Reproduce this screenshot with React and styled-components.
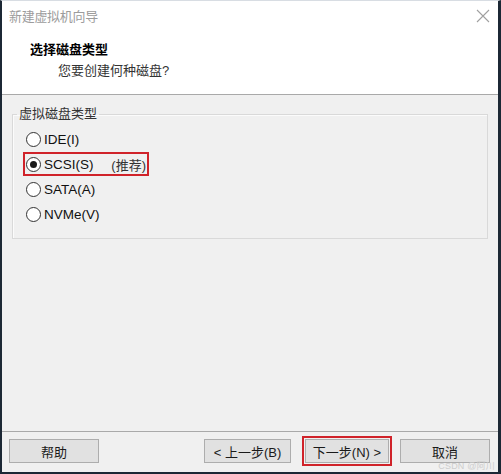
import React from 'react';
import styled, { createGlobalStyle } from 'styled-components';

const GlobalStyle = createGlobalStyle`
  html, body {
    margin: 0;
    padding: 0;
    background: #ffffff;
  }
  body {
    font-family: "Liberation Sans", "Noto Sans CJK SC", sans-serif;
  }
`;

const Window = styled.div`
  position: relative;
  width: 501px;
  height: 474px;
  box-sizing: border-box;
  display: flex;
  flex-direction: column;
  border-left: 2px solid #1c2835;
  border-right: 3px solid #1c2835;
  border-bottom: 2px solid #1c2835;
  border-top: 1px solid #d8dde3;
  background: #f0f0f0;
  overflow: hidden;
`;

const TitleBar = styled.div`
  height: 29px;
  display: flex;
  align-items: center;
  justify-content: space-between;
  padding: 0 8px 0 7px;
  background: #ffffff;
`;

const TitleText = styled.span`
  font-size: 13px;
  color: #9c9c9c;
  letter-spacing: -0.3px;
`;

const Header = styled.div`
  height: 65px;
  background: #ffffff;
  border-bottom: 1px solid #a9a9a9;
  padding: 10px 0 0 28px;
  box-sizing: border-box;
  display: flex;
  flex-direction: column;
`;

const Heading = styled.div`
  font-size: 13px;
  font-weight: bold;
  color: #000000;
  line-height: 20px;
`;

const SubHeading = styled.div`
  font-size: 13px;
  color: #333333;
  line-height: 20px;
  margin: 1px 0 0 28px;
`;

const Body = styled.div`
  flex: 1;
  padding: 11px 10px 0 10px;
`;

const Group = styled.fieldset`
  margin: 0;
  padding: 0 0 12px 4px;
  border: 1px solid #d9d9d9;
  box-shadow: inset 1px 1px 0 #fbfbfb;
  display: flex;
  flex-direction: column;
  gap: 1px;
`;

const Legend = styled.legend`
  font-size: 13px;
  line-height: 16px;
  color: #333333;
  padding: 0 2px;
`;

const Row = styled.label`
  display: inline-flex;
  align-items: center;
  align-self: flex-start;
  height: 24px;
  box-sizing: border-box;
  margin: ${p => (p.$first ? '5px' : '0')} 0 0 6px;
  padding-left: 1px;
  width: ${p => (p.$highlight ? '126px' : 'auto')};
  border: 2px solid ${p => (p.$highlight ? '#d0232a' : 'transparent')};
  gap: 3px;
`;

const Radio = styled.span`
  width: 13px;
  height: 13px;
  border-radius: 50%;
  border: 1px solid #333333;
  background: #ffffff;
  display: flex;
  align-items: center;
  justify-content: center;
  flex-shrink: 0;

  &::after {
    content: '';
    display: ${p => (p.$checked ? 'block' : 'none')};
    width: 7px;
    height: 7px;
    border-radius: 50%;
    background: #1a1a1a;
  }
`;

const RowText = styled.span`
  font-size: 13.5px;
  color: #111111;
`;

const Hint = styled.span`
  font-size: 13px;
  color: #333333;
  margin-left: auto;
  margin-right: 1px;
`;

const Footer = styled.div`
  height: 41px;
  border-top: 1px solid #a9a9a9;
  display: flex;
  align-items: flex-start;
  padding: 7px 8px 0 7px;
  box-sizing: border-box;
`;

const Button = styled.button`
  width: ${p => p.$w}px;
  height: 24px;
  margin-left: ${p => p.$ml || 0}px;
  font-family: "Liberation Sans", "Noto Sans CJK SC", sans-serif;
  font-size: 13px;
  color: #1a1a1a;
  background: #e1e1e1;
  border: 1px solid #adadad;
  padding: 0;
  outline: ${p => (p.$marked ? '2px solid #d0232a' : 'none')};
  outline-offset: 1px;
`;

const Spacer = styled.div`
  flex: 1;
`;

const Watermark = styled.span`
  position: absolute;
  right: 3px;
  bottom: 1px;
  font-size: 9px;
  line-height: 10px;
  color: #cdcdcd;
  letter-spacing: 0.2px;
`;

const CloseIcon = () => (
  <svg width="14" height="14" viewBox="0 0 14 14">
    <path d="M1 1L13 13M13 1L1 13" stroke="#a0a0a0" strokeWidth="1.1" fill="none" />
  </svg>
);

const options = [
  { id: 'ide', label: 'IDE(I)' },
  { id: 'scsi', label: 'SCSI(S)', hint: '(推荐)', checked: true },
  { id: 'sata', label: 'SATA(A)' },
  { id: 'nvme', label: 'NVMe(V)' },
];

const App = () => {
  return (
    <>
      <GlobalStyle />
      <Window>
        <TitleBar>
          <TitleText>新建虚拟机向导</TitleText>
          <CloseIcon />
        </TitleBar>
        <Header>
          <Heading>选择磁盘类型</Heading>
          <SubHeading>您要创建何种磁盘?</SubHeading>
        </Header>
        <Body>
          <Group>
            <Legend>虚拟磁盘类型</Legend>
            {options.map((opt, i) => (
              <Row key={opt.id} $first={i === 0} $highlight={!!opt.hint}>
                <Radio $checked={opt.checked} />
                <RowText>{opt.label}</RowText>
                {opt.hint && <Hint>{opt.hint}</Hint>}
              </Row>
            ))}
          </Group>
        </Body>
        <Footer>
          <Button $w={90}>帮助</Button>
          <Spacer />
          <Button $w={87}>&lt; 上一步(B)</Button>
          <Button $w={84} $ml={14} $marked>下一步(N) &gt;</Button>
          <Button $w={90} $ml={11}>取消</Button>
        </Footer>
        <Watermark>CSDN @阿川</Watermark>
      </Window>
    </>
  );
};

export default App;
